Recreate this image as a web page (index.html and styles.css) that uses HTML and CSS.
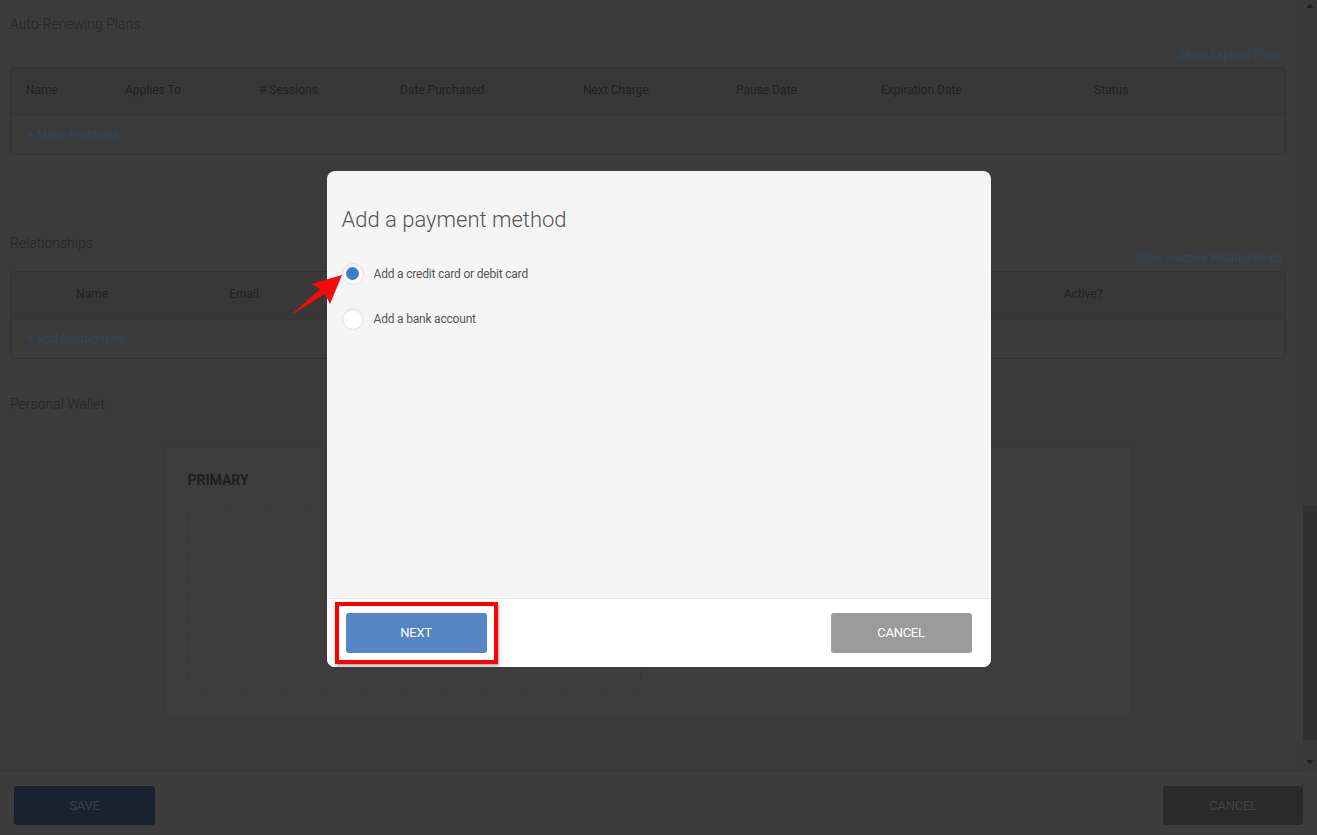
FILE: index.html
```html
<!DOCTYPE html>
<html lang="en">
<head>
  <meta charset="UTF-8">
  <meta name="viewport" content="width=device-width, initial-scale=1.0">
  <title>Client Profile</title>
  <link rel="stylesheet" href="styles.css">
</head>
<body>
  <div class="page">
    <div class="main">
      <div class="content">
        <h2 class="section-title">Auto-Renewing Plans</h2>
        <div class="section-link"><a href="#">Show Expired Plans</a></div>
        <div class="table">
          <div class="table-head plans">
            <span>Name</span>
            <span>Applies To</span>
            <span># Sessions</span>
            <span>Date Purchased</span>
            <span>Next Charge</span>
            <span>Pause Date</span>
            <span>Expiration Date</span>
            <span>Status</span>
          </div>
          <div class="table-row"><a href="#">+ Make Purchase</a></div>
        </div>

        <h2 class="section-title second">Relationships</h2>
        <div class="section-link tight"><a href="#">Show inactive Relationships</a></div>
        <div class="table">
          <div class="table-head relations">
            <span>Name</span>
            <span>Email</span>
            <span></span>
            <span>Active?</span>
          </div>
          <div class="table-row"><a href="#">+ Add Relationship</a></div>
        </div>

        <h2 class="section-title third">Personal Wallet</h2>
        <div class="wallet">
          <h3>PRIMARY</h3>
          <div class="wallet-slot"></div>
        </div>
      </div>
      <!-- scrollbar -->
      <div class="scrollbar">
        <span class="arrow up"></span>
        <div class="track"><div class="thumb"></div></div>
        <span class="arrow down"></span>
      </div>
    </div>
    <div class="footer-bar">
      <button class="btn save">SAVE</button>
      <button class="btn page-cancel">CANCEL</button>
    </div>
  </div>

  <div class="overlay">
    <div class="modal">
      <div class="modal-body">
        <h1>Add a payment method</h1>
        <label class="option">
          <span class="radio checked"></span>
          <span>Add a credit card or debit card</span>
        </label>
        <label class="option">
          <span class="radio"></span>
          <span>Add a bank account</span>
        </label>
      </div>
      <div class="modal-footer">
        <button class="btn next">NEXT</button>
        <button class="btn cancel">CANCEL</button>
      </div>
      <!-- annotations -->
      <svg class="pointer" width="62" height="52" viewBox="0 0 62 52">
        <polygon points="57,7 26,16 35,21 6,47 40,26 45,36" fill="#f20c0c"/>
      </svg>
      <div class="highlight"></div>
    </div>
  </div>
</body>
</html>
```

FILE: styles.css
```css
* {
  box-sizing: border-box;
}
body {
  margin: 0;
  font-family: Roboto, "Liberation Sans", sans-serif;
  background-color: #3c3c3c;
  color: #242424;
  overflow: hidden;
}
a {
  color: #33455d;
  text-decoration: none;
}
.page {
  height: 835px;
  display: flex;
  flex-direction: column;
}
.main {
  height: 770px;
  display: flex;
  background-color: #3b3b3b;
}
.content {
  flex: 1;
  padding: 0 17px 0 10px;
}
.section-title {
  margin: 16px 0 15px;
  font-size: 14px;
  font-weight: 300;
  line-height: 16px;
  color: #262626;
}
.section-title.second {
  margin: 80px 0 -1px;
}
.section-title.third {
  margin: 37px 0 35px;
}
.section-link {
  text-align: right;
  font-size: 12px;
  line-height: 16px;
  padding-right: 3px;
  margin-bottom: 4px;
}
.section-link.tight {
  margin-bottom: 5px;
}
.table {
  border: 1px solid #333;
  border-radius: 4px;
  font-size: 12px;
}
.table-head {
  display: grid;
  align-items: center;
  height: 48px;
  padding-bottom: 4px;
  background-color: #383838;
  border-bottom: 1px solid #353535;
  color: #222;
  border-radius: 4px 4px 0 0;
}
.table-head.plans {
  grid-template-columns: 99px 134px 141px 183px 153px 145px 213px 1fr;
  padding-left: 15px;
}
.table-head.relations {
  grid-template-columns: 162px 142px 1fr 124px 140px;
  text-align: center;
}
.table-head.relations span:nth-child(4) {
  grid-column: 4;
}
.table-row {
  height: 38px;
  display: flex;
  align-items: center;
  padding-left: 16px;
}
.wallet {
  width: 967px;
  margin: 0 auto;
  padding: 24px 22px 25px;
  background-color: #3d3d3d;
  border: 1px solid #393939;
}
.wallet h3 {
  margin: 0 0 19px;
  font-size: 14px;
  line-height: 16px;
  font-weight: 700;
  color: #1f1f1f;
}
.wallet-slot {
  width: 453px;
  height: 185px;
  border: 1px dashed #383838;
  border-radius: 6px;
}
.scrollbar {
  width: 14px;
  display: flex;
  flex-direction: column;
  align-items: center;
  background-color: #393939;
}
.arrow {
  width: 0;
  height: 0;
  border-left: 4px solid transparent;
  border-right: 4px solid transparent;
}
.arrow.up {
  margin: 4px 0 3px;
  border-bottom: 4px solid #1e1e1e;
}
.arrow.down {
  margin: 3px 0 6px;
  border-top: 4px solid #1e1e1e;
}
.track {
  flex: 1;
  width: 100%;
  display: flex;
  flex-direction: column;
  justify-content: flex-end;
  padding-bottom: 17px;
}
.thumb {
  height: 234px;
  background-color: #313131;
}
.footer-bar {
  flex: 1;
  display: flex;
  justify-content: space-between;
  align-items: flex-start;
  padding: 15px 14px 0;
  border-top: 1px solid #373737;
  background-color: #3c3c3c;
}
.btn {
  width: 141px;
  height: 40px;
  border: none;
  border-radius: 3px;
  font-family: Roboto, "Liberation Sans", sans-serif;
  font-size: 13px;
  letter-spacing: -0.3px;
  cursor: pointer;
}
.btn.save {
  height: 39px;
  background-color: #19232f;
  color: #36404c;
}
.btn.page-cancel {
  width: 140px;
  height: 39px;
  background-color: #2a2a2a;
  color: #434343;
}
.overlay {
  position: fixed;
  inset: 0;
  display: flex;
  justify-content: center;
  align-items: center;
}
.modal {
  position: relative;
  width: 664px;
  height: 496px;
  margin-top: 2px;
  display: flex;
  flex-direction: column;
  border-radius: 8px;
  background-color: #f5f5f5;
}
.modal-body {
  flex: 1;
  padding: 36px 15px 0;
  border-radius: 8px 8px 0 0;
}
.modal-body h1 {
  margin: 0 0 30px;
  font-size: 22px;
  font-weight: 300;
  line-height: 26px;
  color: #555;
}
.option {
  display: flex;
  align-items: center;
  gap: 10px;
  margin-bottom: 23px;
  font-size: 12px;
  letter-spacing: -0.2px;
  color: #555;
}
.radio {
  width: 22px;
  height: 22px;
  border-radius: 50%;
  background-color: #fff;
  border: 1px solid #e2e2e2;
  box-shadow: inset 0 1px 2px rgba(0, 0, 0, 0.12);
  display: flex;
  justify-content: center;
  align-items: center;
}
.radio.checked::after {
  content: "";
  width: 13px;
  height: 13px;
  border-radius: 50%;
  background-color: #3a80c6;
}
.modal-footer {
  height: 69px;
  display: flex;
  justify-content: space-between;
  padding: 14px 19px 0;
  border-top: 1px solid #e6e6e6;
  background-color: #fff;
  border-radius: 0 0 8px 8px;
}
.btn.next {
  background-color: #5585c2;
  color: #fff;
}
.btn.cancel {
  background-color: #9b9b9b;
  color: #fff;
}
.pointer {
  position: absolute;
  left: -42px;
  top: 97px;
}
.highlight {
  position: absolute;
  left: 8px;
  top: 431px;
  width: 163px;
  height: 62px;
  border: 4px solid #f00;
  box-shadow: 1px 2px 3px rgba(0, 0, 0, 0.35);
}
```
